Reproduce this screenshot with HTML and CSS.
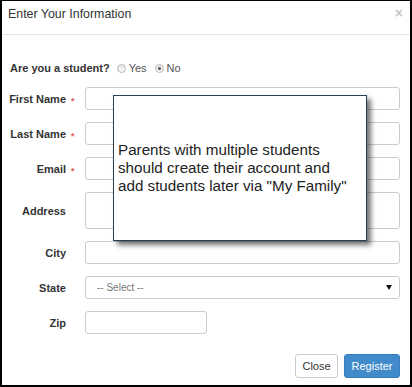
FILE: index.html
```
<!DOCTYPE html>
<html>
<head>
<meta charset="utf-8">
<link rel="stylesheet" href="styles.css">
</head>
<body>
<div class="frame">
  <div class="modal-header">
    <span class="modal-title">Enter Your Information</span>
    <span class="close">&times;</span>
  </div>
  <div class="modal-body">
    <div class="student-row">
      <span class="q">Are you a student?</span>
      <span class="radio"></span><span class="opt">Yes</span>
      <span class="radio checked"></span><span class="opt">No</span>
    </div>
    <div class="form">
      <div class="row"><div class="label"><span class="txt">First Name</span><span class="req">*</span></div><div class="input"></div></div>
      <div class="row"><div class="label"><span class="txt">Last Name</span><span class="req">*</span></div><div class="input"></div></div>
      <div class="row"><div class="label"><span class="txt">Email</span><span class="req">*</span></div><div class="input"></div></div>
      <div class="row"><div class="label"><span class="txt">Address</span><span class="req"></span></div><div class="input textarea"></div></div>
      <div class="row"><div class="label"><span class="txt">City</span><span class="req"></span></div><div class="input"></div></div>
      <div class="row"><div class="label"><span class="txt">State</span><span class="req"></span></div><div class="input select"><span class="ph">-- Select --</span><svg class="caret" width="6" height="5" viewBox="0 0 6 5"><polygon points="0,0 6,0 3,5" fill="#111"/></svg></div></div>
      <div class="row"><div class="label"><span class="txt">Zip</span><span class="req"></span></div><div class="input zip"></div></div>
    </div>
    <div class="footer">
      <span class="btn btn-default">Close</span>
      <span class="btn btn-primary">Register</span>
    </div>
  </div>
  <div class="tip">
    <div class="tip-text">Parents with multiple students<br>should create their account and<br>add students later via "My Family"</div>
  </div>
</div>
</body>
</html>
```
FILE: styles.css
```
html, body {
  margin: 0;
  padding: 0;
  background: #fff;
}
body {
  font-family: "Liberation Sans", Arial, sans-serif;
  color: #333;
}
.frame {
  position: relative;
  width: 412px;
  height: 387px;
  box-sizing: border-box;
  border-top: 1px solid #000;
  border-left: 2px solid #000;
  border-right: 2px solid #000;
  border-bottom: 2px solid #000;
}
.modal-header {
  display: flex;
  justify-content: space-between;
  align-items: flex-start;
  height: 34px;
  box-sizing: border-box;
  padding: 5px 7px 0 6px;
  border-bottom: 1px solid #e5e5e5;
}
.modal-title {
  font-size: 12.4px;
  line-height: 17px;
  color: #333;
}
.close {
  font-size: 14px;
  font-weight: bold;
  line-height: 14px;
  color: #c8c8c8;
}
.modal-body {
  padding: 25px 10px 0 8px;
}
.student-row {
  display: flex;
  align-items: center;
  height: 16px;
  font-size: 11px;
}
.q {
  font-weight: bold;
  color: #333;
  margin-right: 7px;
}
.radio {
  width: 7px;
  height: 7px;
  border: 1px solid #b8b8b8;
  border-radius: 50%;
  background: linear-gradient(#e6e6e6, #f8f8f8);
  margin-right: 3px;
  position: relative;
}
.radio.checked::after {
  content: "";
  position: absolute;
  left: 2px;
  top: 2px;
  width: 3px;
  height: 3px;
  border-radius: 50%;
  background: #555;
}
.opt {
  color: #555;
  margin-right: 8px;
}
.form {
  display: flex;
  flex-direction: column;
  gap: 12px;
  margin-top: 11px;
}
.row {
  display: flex;
  align-items: center;
}
.label {
  display: flex;
  align-items: center;
  width: 67px;
  flex: none;
  margin-right: 8px;
  font-size: 11px;
  font-weight: bold;
  color: #333;
}
.txt {
  width: 56px;
  text-align: right;
  white-space: nowrap;
  direction: rtl;
}
.req {
  width: 11px;
  height: 13px;
  padding-left: 5px;
  box-sizing: border-box;
  color: #e35b5b;
  font-size: 9px;
  line-height: 13px;
  position: relative;
  top: 3px;
}
.input {
  flex: 1;
  height: 23px;
  box-sizing: border-box;
  border: 1px solid #ccc;
  border-radius: 3px;
  background: #fff;
}
.textarea {
  height: 37px;
}
.select {
  display: flex;
  align-items: center;
  justify-content: space-between;
  padding: 0 7px 0 11px;
  font-size: 10px;
  color: #777;
}
.caret {
  display: block;
}
.zip {
  flex: none;
  width: 122px;
}
.footer {
  display: flex;
  justify-content: flex-end;
  gap: 6px;
  margin-top: 20px;
}
.btn {
  display: flex;
  align-items: center;
  justify-content: center;
  height: 24px;
  box-sizing: border-box;
  border-radius: 3px;
  font-size: 11px;
}
.btn-default {
  width: 43px;
  border: 1px solid #ccc;
  background: #fff;
  color: #333;
}
.btn-primary {
  width: 56px;
  border: 1px solid #357ebd;
  background: #428bca;
  color: #fff;
}
.tip {
  position: absolute;
  left: 111px;
  top: 94px;
  width: 254px;
  height: 146px;
  box-sizing: border-box;
  border: 1px solid #2c3e57;
  background: #fff;
  box-shadow: 4px 4px 5px rgba(0, 0, 0, 0.55);
  display: flex;
  align-items: center;
  padding: 0 4px;
}
.tip-text {
  font-size: 15.2px;
  line-height: 18px;
  color: #222;
}
```
